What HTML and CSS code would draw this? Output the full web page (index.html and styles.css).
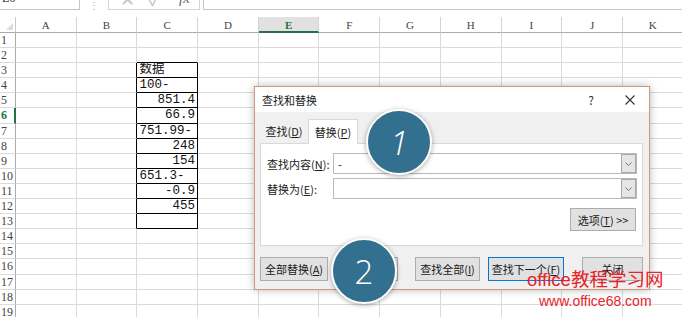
FILE: index.html
```html
<!DOCTYPE html>
<html lang="zh-CN">
<head>
    <meta charset="UTF-8">
    <meta name="viewport" content="width=device-width, initial-scale=1.0">
    <title>查找和替换</title>
    <link rel="stylesheet" href="styles.css">
</head>
<body>

    <!-- Barra de fórmulas (solo se ve la parte de abajo) -->
    <div class="formula-bar">
        <div class="name-box">
            <span>E6</span>
            <svg width="7" height="5" viewBox="0 0 7 5"><polyline points="0.5,0.5 3.5,3.5 6.5,0.5" fill="none" stroke="#888" stroke-width="1"/></svg>
        </div>
        <div class="bar-dots">⋮</div>
        <div class="fx-box">
            <span class="bar-icon">✕</span>
            <span class="bar-icon">✓</span>
            <span class="fx">fx</span>
        </div>
        <div class="formula-input"></div>
    </div>

    <!-- Hoja de cálculo -->
    <div class="sheet" id="sheet">
        <!-- Aquí se generan las celdas -->
    </div>

    <!-- Ventana de buscar y reemplazar -->
    <div class="dialog">
        <div class="dialog-title">
            <span class="title">查找和替换</span>
            <span class="help">?</span>
            <svg class="close" width="10" height="10" viewBox="0 0 10 10"><path d="M0.5 0.5 L9.5 9.5 M9.5 0.5 L0.5 9.5" stroke="#333" stroke-width="1.1"/></svg>
        </div>
        <div class="dialog-body">
            <div class="tabs">
                <div class="tab">查找(<u>D</u>)</div>
                <div class="tab active">替换(<u>P</u>)</div>
            </div>
            <div class="panel">
                <div class="field">
                    <label>查找内容(<u>N</u>):</label>
                    <div class="combo">
                        <span class="combo-text">-</span>
                        <span class="combo-btn"><svg width="7" height="4" viewBox="0 0 7 4"><polyline points="0.5,0.5 3.5,3.5 6.5,0.5" fill="none" stroke="#777" stroke-width="1"/></svg></span>
                    </div>
                </div>
                <div class="field">
                    <label>替换为(<u>E</u>):</label>
                    <div class="combo">
                        <span class="combo-text"></span>
                        <span class="combo-btn"><svg width="7" height="4" viewBox="0 0 7 4"><polyline points="0.5,0.5 3.5,3.5 6.5,0.5" fill="none" stroke="#777" stroke-width="1"/></svg></span>
                    </div>
                </div>
                <div class="options-row">
                    <button class="btn btn-options">选项(<u>T</u>) &gt;&gt;</button>
                </div>
            </div>
            <div class="actions">
                <button class="btn btn-replace-all">全部替换(<u>A</u>)</button>
                <button class="btn btn-replace">替换(<u>R</u>)</button>
                <button class="btn btn-find-all">查找全部(<u>I</u>)</button>
                <button class="btn btn-find-next">查找下一个(<u>F</u>)</button>
                <button class="btn btn-close">关闭</button>
            </div>
        </div>
    </div>

    <!-- Marcas numeradas -->
    <div class="badge badge-1"><span>1</span></div>
    <div class="badge badge-2"><span>2</span></div>

    <div class="watermark">
        <div class="wm-title">office教程学习网</div>
        <div class="wm-url">www.office68.com</div>
    </div>

    <script>
        // Datos de la columna C
        const data = {
            3: ["数据", "left"],
            4: ["100-", "left"],
            5: ["851.4", "right"],
            6: ["66.9", "right"],
            7: ["751.99-", "left"],
            8: ["248", "right"],
            9: ["154", "right"],
            10: ["651.3-", "left"],
            11: ["-0.9", "right"],
            12: ["455", "right"],
            13: ["", "left"]
        };
        const letters = ["A", "B", "C", "D", "E", "F", "G", "H", "I", "J", "K"];

        function buildSheet() {
            const sheet = document.getElementById("sheet");

            const corner = document.createElement("div");
            corner.className = "corner";
            sheet.appendChild(corner);

            letters.forEach(function(letter) {
                const head = document.createElement("div");
                head.className = "col-head";
                if (letter === "E") head.classList.add("active-col");
                head.textContent = letter;
                sheet.appendChild(head);
            });

            for (let r = 1; r <= 19; r++) {
                const rowHead = document.createElement("div");
                rowHead.className = "row-head";
                if (r === 6) rowHead.classList.add("active-row");
                rowHead.textContent = r;
                sheet.appendChild(rowHead);

                letters.forEach(function(letter) {
                    const cell = document.createElement("div");
                    cell.className = "cell";
                    if (letter === "B" && r >= 3 && r <= 13) cell.classList.add("box-left");
                    if (letter === "C" && r === 2) cell.classList.add("box-top");
                    if (letter === "C" && data[r]) {
                        cell.classList.add("boxed", data[r][1]);
                        cell.textContent = data[r][0];
                    }
                    sheet.appendChild(cell);
                });
            }
        }

        buildSheet();
    </script>

</body>
</html>
```

FILE: styles.css
```css
body {
    margin: 0;
    width: 682px;
    height: 317px;
    overflow: hidden;
    position: relative;
    background-color: #fff;
    font-family: "Noto Sans CJK SC", sans-serif;
}

/* barra de fórmulas */
.formula-bar {
    display: flex;
    align-items: flex-end;
    height: 10px;
    overflow: hidden;
}

.name-box {
    flex: 0 0 80px;
    height: 24px;
    box-sizing: border-box;
    border: 1px solid #c6c6c6;
    border-left: none;
    display: flex;
    align-items: center;
    justify-content: space-between;
    padding: 0 3px 0 2px;
    font: 12px "Liberation Serif", serif;
    color: #333;
}

.bar-dots {
    flex: 0 0 28px;
    align-self: center;
    text-align: center;
    font-size: 10px;
    line-height: 10px;
    color: #aaa;
}

.fx-box {
    flex: 0 0 92px;
    height: 24px;
    box-sizing: border-box;
    border: 1px solid #d4d4d4;
    display: flex;
    align-items: center;
    padding-left: 4px;
}

.bar-icon {
    width: 28px;
    text-align: center;
    font-size: 18px;
    color: #c4c4c4;
}

.fx {
    margin-left: 10px;
    font: italic 15px "Liberation Serif", serif;
    color: #666;
}

.formula-input {
    flex: 1;
    height: 24px;
    margin-left: 3px;
    box-sizing: border-box;
    border: 1px solid #c6c6c6;
    border-right: none;
}

/* hoja */
.sheet {
    margin-top: 7px;
    display: grid;
    grid-template-columns: 16px repeat(11, 60.7px);
    grid-template-rows: 16px repeat(19, 15.1px);
}

.corner {
    position: relative;
    border-right: 1px solid #c8c8c8;
    border-bottom: 1px solid #ababab;
}

.corner::after {
    content: "";
    position: absolute;
    right: 2px;
    bottom: 2px;
    border-left: 7px solid transparent;
    border-bottom: 7px solid #dcdcdc;
}

.col-head {
    box-sizing: border-box;
    border-right: 1px solid #d4d4d4;
    border-bottom: 1px solid #ababab;
    text-align: center;
    font: 11px/16px "Liberation Serif", serif;
    color: #444;
}

.col-head.active-col {
    background-color: #e1e1e1;
    border-bottom: 2px solid #217346;
    color: #217346;
    font-weight: bold;
}

.row-head {
    box-sizing: border-box;
    border-right: 1px solid #ababab;
    border-bottom: 1px solid #dadada;
    padding-left: 1px;
    font: 12px/14px "Liberation Serif", serif;
    color: #444;
}

.row-head.active-row {
    border-right: 2px solid #217346;
    color: #217346;
    font-weight: bold;
}

.cell {
    box-sizing: border-box;
    border-right: 1px solid #dadada;
    border-bottom: 1px solid #dadada;
    padding: 0 2px;
    font: 12.5px/14px "Liberation Mono", "Noto Sans CJK SC", monospace;
    color: #111;
    white-space: nowrap;
    overflow: hidden;
}

.cell.box-left {
    border-right-color: #000;
}

.cell.box-top,
.cell.boxed {
    border-bottom-color: #000;
}

.cell.boxed {
    border-right-color: #000;
}

.cell.left {
    text-align: left;
}

.cell.right {
    text-align: right;
}

/* ventana */
.dialog {
    position: absolute;
    left: 254px;
    top: 86px;
    width: 396px;
    height: 204px;
    box-sizing: border-box;
    border: 1px solid #cf957f;
    background-color: #f0f0f0;
    box-shadow: 0 0 8px rgba(0, 0, 0, 0.28);
    display: flex;
    flex-direction: column;
    font-size: 11px;
    color: #1a1a1a;
}

.dialog-title {
    height: 25px;
    background-color: #fff;
    display: flex;
    align-items: center;
    padding: 0 14px 0 7px;
}

.dialog-title .title {
    flex: 1;
}

.help {
    margin-right: 31px;
    font-size: 12px;
    color: #333;
}

.dialog-body {
    flex: 1;
    padding: 7px 6px 0 5px;
}

.tabs {
    display: flex;
    height: 24px;
}

.tab {
    width: 48px;
    text-align: center;
    line-height: 24px;
}

.tab.active {
    width: 50px;
    height: 25px;
    box-sizing: border-box;
    background-color: #fff;
    border: 1px solid #d9d9d9;
    border-bottom: none;
    position: relative;
    z-index: 1;
}

.panel {
    height: 103px;
    box-sizing: border-box;
    background-color: #fff;
    border: 1px solid #d9d9d9;
    padding: 9px 5px 0 6px;
}

.field {
    display: flex;
    align-items: center;
    height: 21px;
    margin-bottom: 4px;
}

.field label {
    width: 66px;
}

.combo {
    flex: 1;
    height: 21px;
    box-sizing: border-box;
    border: 1px solid #b9b9b9;
    display: flex;
    align-items: center;
}

.combo-text {
    flex: 1;
    padding-left: 4px;
}

.combo-btn {
    width: 15px;
    height: 19px;
    box-sizing: border-box;
    background-color: #e6e6e6;
    border: 1px solid #a8a8a8;
    display: flex;
    align-items: center;
    justify-content: center;
}

.options-row {
    display: flex;
    justify-content: flex-end;
    margin-top: 9px;
    padding-right: 1px;
}

.btn {
    height: 24px;
    box-sizing: border-box;
    background-color: #e1e1e1;
    border: 1px solid #adadad;
    font-family: "Noto Sans CJK SC", sans-serif;
    font-size: 11px;
    color: #1a1a1a;
    padding: 0;
}

.btn-options {
    width: 66px;
    height: 23px;
}

.actions {
    display: flex;
    margin-top: 11px;
}

.btn-replace-all {
    width: 68px;
}

.btn-replace {
    width: 63px;
    margin-left: 7px;
}

.btn-find-all {
    width: 65px;
    margin-left: 17px;
}

.btn-find-next {
    width: 76px;
    margin-left: 8px;
    border-color: #0078d7;
}

.btn-close {
    width: 61px;
    margin-left: 18px;
}

/* marcas */
.badge {
    position: absolute;
    width: 66px;
    height: 66px;
    box-sizing: border-box;
    border: 2px solid #fff;
    border-radius: 50%;
    background-color: #33708f;
    box-shadow: 0 1px 5px rgba(0, 0, 0, 0.35);
    display: flex;
    align-items: center;
    justify-content: center;
    color: #fff;
    font-family: "Open Sans", sans-serif;
    font-weight: 300;
    font-size: 33px;
}

.badge-1 {
    left: 366px;
    top: 109px;
}

.badge-1 span {
    font-style: italic;
}

.badge-2 {
    left: 331px;
    top: 238px;
}

.watermark {
    position: absolute;
    left: 527px;
    top: 268px;
    color: #e8232a;
    font-family: "Liberation Sans", "Noto Sans CJK SC", sans-serif;
}

.wm-title {
    font-size: 18.5px;
    line-height: 24px;
}

.wm-url {
    margin-left: 12px;
    font-size: 14px;
    line-height: 18px;
}
```
